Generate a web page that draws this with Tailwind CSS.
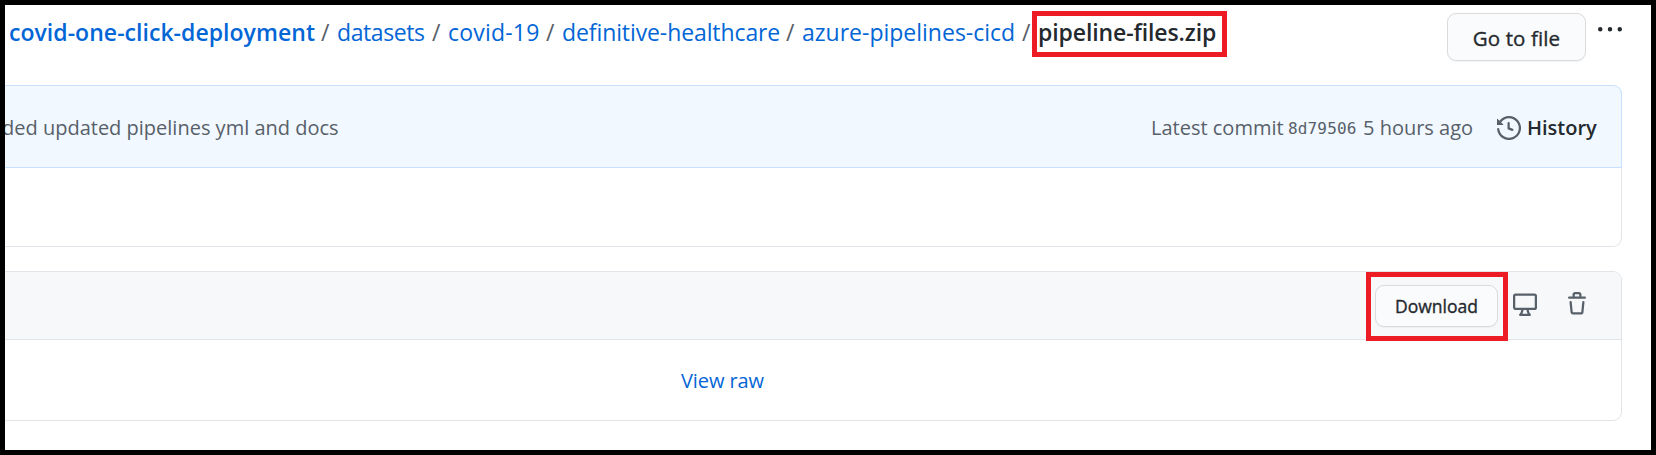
<!DOCTYPE html>
<html lang="en">
<head>
<meta charset="utf-8">
<title>pipeline-files.zip</title>
<script src="https://cdn.jsdelivr.net/npm/@tailwindcss/browser@4"></script>
</head>
<body class="h-[455px] w-[1656px] overflow-hidden bg-white font-['Open_Sans','Noto_Sans',sans-serif] text-[#586069]">
<main class="h-[455px] w-[1656px] overflow-hidden border-5 border-black">
  <header class="flex h-20 items-start whitespace-nowrap">
    <nav class="flex h-[57px] w-[1442px] items-start pt-[9px] pl-1 text-[23px] leading-9">
      <a class="w-[312px] font-semibold tracking-[0.04px] text-[#0366d6]">covid-one-click-deployment</a>
      <span class="w-[16px]">/</span>
      <a class="w-[95px] tracking-[-0.4px] text-[#0366d6]">datasets</a>
      <span class="w-[16px]">/</span>
      <a class="w-[98px] tracking-[0.2px] text-[#0366d6]">covid-19</a>
      <span class="w-[16px]">/</span>
      <a class="w-[224px] tracking-[-0.1px] text-[#0366d6]">definitive-healthcare</a>
      <span class="w-[16px]">/</span>
      <a class="w-[220px] text-[#0366d6]">azure-pipelines-cicd</a>
      <span class="w-[10px]">/</span>
      <strong class="-mt-[3px] h-[46px] w-[195px] border-5 border-[#ed1c24] pl-px leading-[32px] font-semibold tracking-[-0.1px] text-[#24292e]">pipeline-files.zip</strong>
    </nav>
    <button class="mt-2 h-12 w-[139px] rounded-[9px] border border-[#d9dbdd] bg-[#fafbfc] pt-[2px] text-center text-[20.5px] tracking-[0.1px] text-[#24292e] shadow-[0_1px_1px_#1b1f230a] [-webkit-text-stroke:0.35px_#24292e]">Go to file</button>
    <svg class="mt-[13px] ml-3 size-6 fill-[#24292e]" viewBox="0 0 16 16"><path d="M8 9a1.5 1.5 0 100-3 1.5 1.5 0 000 3zM1.5 9a1.5 1.5 0 100-3 1.5 1.5 0 000 3zm13 0a1.5 1.5 0 100-3 1.5 1.5 0 000 3z"/></svg>
  </header>

  <section class="h-[162px] w-[1617px] rounded-r-[9px] border border-l-0 border-[#e1e4e8]">
    <div class="-mt-px -mr-px flex h-[83px] items-center justify-between rounded-tr-[9px] border border-l-0 border-[#c8e1ff] bg-[#f1f8ff] pr-[24px] text-[20px] whitespace-nowrap">
      <p class="-ml-[3px] pt-0.5">ded updated pipelines yml and docs</p>
      <div class="flex items-center">
        <span class="w-[137px] pt-0.5">Latest commit</span>
        <span class="w-[75px] pt-[5px] font-['DejaVu_Sans_Mono',monospace] text-[16px] tracking-[0.15px]">8d79506</span>
        <span class="w-[134px] pt-0.5">5 hours ago</span>
        <svg class="mt-0.5 size-6 fill-[#586069]" viewBox="0 0 16 16"><path fill-rule="evenodd" d="M1.643 3.143L.427 1.927A.25.25 0 000 2.104V5.75c0 .138.112.25.25.25h3.646a.25.25 0 00.177-.427L2.715 4.215a6.5 6.5 0 11-1.18 4.458.75.75 0 10-1.493.154 8.001 8.001 0 101.6-5.684zM7.75 4a.75.75 0 01.75.75v2.992l2.028.812a.75.75 0 01-.557 1.392l-2.5-1A.75.75 0 017 8.25v-3.5A.75.75 0 017.75 4z"/></svg>
        <a class="ml-[6px] w-[70px] pt-0.5 font-semibold text-[#24292e]">History</a>
      </div>
    </div>
  </section>

  <section class="mt-6 h-[150px] w-[1617px] rounded-r-[9px] border border-l-0 border-[#e1e4e8]">
    <div class="flex h-[68px] items-start justify-end rounded-tr-[8px] border-b border-[#e1e4e8] bg-[#f6f8fa] pr-[32px]">
      <div class="h-[69px] w-[142px] border-5 border-[#ed1c24] pt-2 pl-1">
        <button class="h-[42px] w-[123px] rounded-[9px] border border-[#d9dbdd] bg-[#fafbfc] pt-px text-center text-[17.5px] text-[#24292e] shadow-[0_1px_1px_#1b1f230a] [-webkit-text-stroke:0.35px_#24292e]">Download</button>
      </div>
      <svg class="mt-[19.5px] ml-[5px] size-6 fill-[#586069]" viewBox="0 0 16 16"><path fill-rule="evenodd" d="M1.75 2.5h12.5a.25.25 0 01.25.25v7.5a.25.25 0 01-.25.25H1.75a.25.25 0 01-.25-.25v-7.5a.25.25 0 01.25-.25zM14.25 1H1.75A1.75 1.75 0 000 2.75v7.5C0 11.216.784 12 1.75 12h3.727c-.1 1.041-.52 1.872-1.292 2.757A.75.75 0 004.75 16h6.5a.75.75 0 00.565-1.243c-.772-.885-1.193-1.716-1.292-2.757h3.727A1.75 1.75 0 0016 10.25v-7.5A1.75 1.75 0 0014.25 1zM9.018 12H6.982a5.72 5.72 0 01-.765 2.5h3.566a5.72 5.72 0 01-.765-2.5z"/></svg>
      <svg class="mt-5 ml-7 size-6 fill-[#586069]" viewBox="0 0 16 16"><path fill-rule="evenodd" d="M6.5 1.75a.25.25 0 01.25-.25h2.5a.25.25 0 01.25.25V3h-3V1.75zm4.5 0V3h2.25a.75.75 0 010 1.5H2.75a.75.75 0 010-1.5H5V1.75C5 .784 5.784 0 6.75 0h2.5C10.216 0 11 .784 11 1.75zM4.496 6.675a.75.75 0 10-1.492.15l.66 6.6A1.75 1.75 0 005.405 15h5.19c.9 0 1.652-.681 1.741-1.576l.66-6.6a.75.75 0 00-1.492-.149l-.66 6.6a.25.25 0 01-.249.225h-5.19a.25.25 0 01-.249-.225l-.66-6.6z"/></svg>
    </div>
    <div class="flex h-20 items-center pt-0.5 pl-[676px] text-[20px] tracking-[-0.1px] text-[#0366d6]"><a>View raw</a></div>
  </section>
</main>
</body>
</html>
